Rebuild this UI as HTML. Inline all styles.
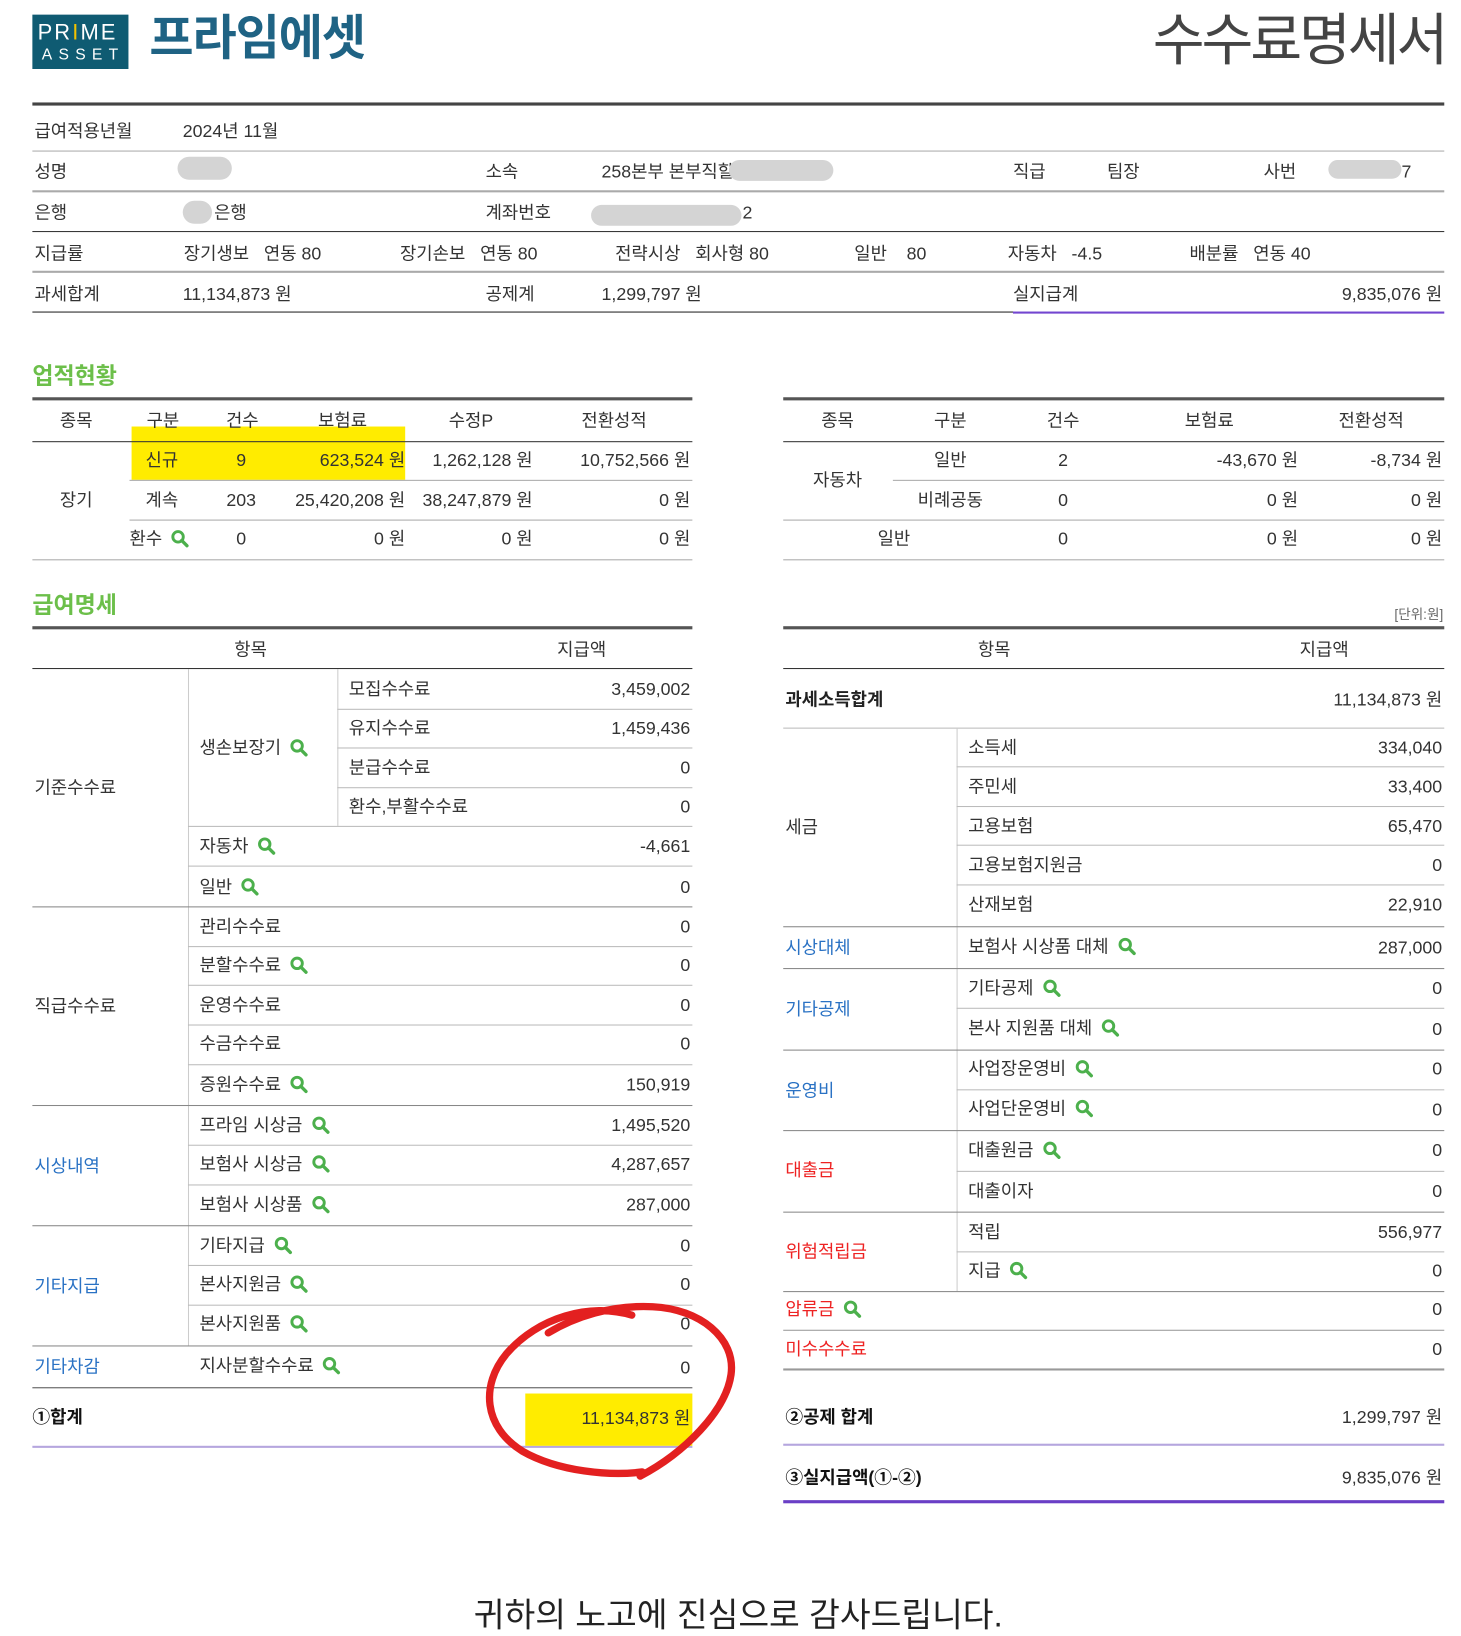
<!DOCTYPE html>
<html><head><meta charset="utf-8">
<style>
html,body{margin:0;padding:0;background:#fff;overflow:hidden}
body{width:1461px;height:1636px;position:relative}
#w{position:absolute;left:0;top:0;width:1390px;height:1565px;transform:scale(1.0443,1.0454);transform-origin:0 0;font-family:"Liberation Sans","Noto Sans CJK KR",sans-serif}
.a{position:absolute;white-space:nowrap;font-size:17px;line-height:22px;color:#333}
.c{transform:translateX(-50%)}
.l{position:absolute;height:1px;background:#bbb}
.v{position:absolute;width:1px;background:#ccc}
.b{color:#2a72c4}.r{color:#ee2222}
.q{display:inline-block;width:18px;height:18px;vertical-align:-3px;margin-left:8px}
.blob{position:absolute;background:#d4d4d4;border-radius:12px}
</style></head><body><div id="w">
<div style="position:absolute;left:31px;top:14px;width:92px;height:52px;background:#0f5b72"></div>
<div class="a" style="left:36px;top:20px;color:#fff;font-size:21px;line-height:24px;letter-spacing:2px">PR<span style="color:#f2c200">I</span>ME</div>
<div class="a" style="left:40px;top:44px;color:#fff;font-size:15px;line-height:18px;letter-spacing:6px">ASSET</div>
<div class="a" style="left:143px;top:8px;font-size:46px;line-height:56px;font-weight:bold;color:#1f6384;letter-spacing:-1px">프라임에셋</div>
<div class="a" style="right:6px;top:6px;font-size:54px;line-height:66px;color:#444;letter-spacing:-3px">수수료명세서</div>
<div class="l" style="left:31px;width:1352px;top:98px;height:3px;background:#444"></div>

<div class="a" style="left:33px;top:115px">급여적용년월</div><div class="a" style="left:175px;top:115px">2024년 11월</div>
<div class="l" style="left:31px;width:1352px;top:144px;background:#aaa"></div>
<div class="a" style="left:33px;top:154px">성명</div><div class="blob" style="left:170px;top:150px;width:52px;height:22px"></div>
<div class="a" style="left:465px;top:154px">소속</div><div class="a" style="left:576px;top:154px">258본부 본부직할</div><div class="blob" style="left:698px;top:153px;width:100px;height:20px"></div>
<div class="a" style="left:970px;top:154px">직급</div><div class="a" style="left:1060px;top:154px">팀장</div>
<div class="a" style="left:1210px;top:154px">사번</div><div class="blob" style="left:1272px;top:153px;width:70px;height:18px"></div><div class="a" style="left:1342px;top:154px">7</div>
<div class="l" style="left:31px;width:1352px;top:182px;height:2px;background:#aaa"></div>
<div class="a" style="left:33px;top:193px">은행</div><div class="blob" style="left:175px;top:192px;width:28px;height:22px"></div><div class="a" style="left:205px;top:193px">은행</div>
<div class="a" style="left:465px;top:193px">계좌번호</div><div class="blob" style="left:566px;top:196px;width:144px;height:20px"></div><div class="a" style="left:711px;top:193px">2</div>
<div class="l" style="left:31px;width:1352px;top:221px;background:#333"></div>
<div class="a" style="left:33px;top:232px">지급률</div>
<div class="a" style="left:176px;top:232px">장기생보&nbsp;&nbsp;&nbsp;연동 80</div>
<div class="a" style="left:383px;top:232px">장기손보&nbsp;&nbsp;&nbsp;연동 80</div>
<div class="a" style="left:589px;top:232px">전략시상&nbsp;&nbsp;&nbsp;회사형 80</div>
<div class="a" style="left:818px;top:232px">일반&nbsp;&nbsp;&nbsp;&nbsp;80</div>
<div class="a" style="left:965px;top:232px">자동차&nbsp;&nbsp;&nbsp;-4.5</div>
<div class="a" style="left:1139px;top:232px">배분률&nbsp;&nbsp;&nbsp;연동 40</div>
<div class="l" style="left:31px;width:1352px;top:259px;height:2px;background:#aaa"></div>
<div class="a" style="left:33px;top:271px">과세합계</div><div class="a" style="left:175px;top:271px">11,134,873 원</div>
<div class="a" style="left:465px;top:271px">공제계</div><div class="a" style="left:576px;top:271px">1,299,797 원</div>
<div class="a" style="left:970px;top:271px">실지급계</div><div class="a" style="right:9px;top:271px">9,835,076 원</div>
<div class="l" style="left:31px;width:940px;top:298px;background:#222"></div>
<div class="l" style="left:970px;width:413px;top:298px;height:2px;background:#7346d0"></div>

<div class="a" style="left:31px;top:346px;font-size:22px;line-height:28px;font-weight:bold;color:#6cbf4a">업적현황</div>
<div style="position:absolute;left:126px;top:408px;width:262px;height:51px;background:#ffec00"></div>
<div class="l" style="left:31px;width:632px;top:380px;height:3px;background:#555"></div>
<div class="l" style="left:750px;width:633px;top:380px;height:3px;background:#555"></div>
<div class="a c" style="left:73px;top:392px">종목</div><div class="a c" style="left:156px;top:392px">구분</div><div class="a c" style="left:232px;top:392px">건수</div><div class="a c" style="left:328px;top:392px">보험료</div><div class="a c" style="left:451px;top:392px">수정P</div><div class="a c" style="left:588px;top:392px">전환성적</div>
<div class="l" style="left:31px;width:632px;top:422px;background:#333"></div>
<div class="a c" style="left:155px;top:430px">신규</div><div class="a c" style="left:231px;top:430px">9</div><div class="a" style="right:1002px;top:430px">623,524 원</div><div class="a" style="right:880px;top:430px">1,262,128 원</div><div class="a" style="right:729px;top:430px">10,752,566 원</div>
<div class="l" style="left:124px;width:539px;top:459px;background:#aaa"></div>
<div class="a c" style="left:73px;top:468px">장기</div>
<div class="a c" style="left:155px;top:468px">계속</div><div class="a c" style="left:231px;top:468px">203</div><div class="a" style="right:1002px;top:468px">25,420,208 원</div><div class="a" style="right:880px;top:468px">38,247,879 원</div><div class="a" style="right:729px;top:468px">0 원</div>
<div class="l" style="left:124px;width:539px;top:497px;background:#aaa"></div>
<div class="a" style="left:124px;top:505px">환수<svg class="q" viewBox="0 0 18 18"><circle cx="7.5" cy="7.5" r="5" fill="none" stroke="#4cb04c" stroke-width="2.8"/><path d="M11 11l5 5" stroke="#4cb04c" stroke-width="3.2" stroke-linecap="round"/></svg></div><div class="a c" style="left:231px;top:505px">0</div><div class="a" style="right:1002px;top:505px">0 원</div><div class="a" style="right:880px;top:505px">0 원</div><div class="a" style="right:729px;top:505px">0 원</div>
<div class="l" style="left:31px;width:632px;top:535px;background:#aaa"></div>

<div class="a c" style="left:802px;top:392px">종목</div><div class="a c" style="left:910px;top:392px">구분</div><div class="a c" style="left:1018px;top:392px">건수</div><div class="a c" style="left:1158px;top:392px">보험료</div><div class="a c" style="left:1313px;top:392px">전환성적</div>
<div class="l" style="left:750px;width:633px;top:422px;background:#333"></div>
<div class="a c" style="left:802px;top:449px">자동차</div>
<div class="a c" style="left:910px;top:430px">일반</div><div class="a c" style="left:1018px;top:430px">2</div><div class="a" style="right:147px;top:430px">-43,670 원</div><div class="a" style="right:9px;top:430px">-8,734 원</div>
<div class="l" style="left:855px;width:528px;top:459px;background:#aaa"></div>
<div class="a c" style="left:910px;top:468px">비례공동</div><div class="a c" style="left:1018px;top:468px">0</div><div class="a" style="right:147px;top:468px">0 원</div><div class="a" style="right:9px;top:468px">0 원</div>
<div class="l" style="left:750px;width:633px;top:497px;background:#aaa"></div>
<div class="a c" style="left:856px;top:505px">일반</div><div class="a c" style="left:1018px;top:505px">0</div><div class="a" style="right:147px;top:505px">0 원</div><div class="a" style="right:9px;top:505px">0 원</div>
<div class="l" style="left:750px;width:633px;top:535px;background:#aaa"></div>

<div class="a" style="left:31px;top:565px;font-size:22px;line-height:28px;font-weight:bold;color:#6cbf4a">급여명세</div>
<div class="a" style="right:8px;top:580px;font-size:13px;line-height:16px;color:#666">[단위:원]</div>
<div class="l" style="left:31px;width:632px;top:599px;height:3px;background:#555"></div>
<div class="l" style="left:750px;width:633px;top:599px;height:3px;background:#555"></div>
<div class="a c" style="left:240px;top:611px">항목</div><div class="a c" style="left:557px;top:611px">지급액</div>
<div class="a c" style="left:952px;top:611px">항목</div><div class="a c" style="left:1268px;top:611px">지급액</div>
<div class="l" style="left:31px;width:632px;top:639px;background:#333"></div>
<div class="l" style="left:750px;width:633px;top:639px;background:#333"></div>

<div class="v" style="left:180px;top:640px;height:647px"></div>
<div class="v" style="left:323px;top:640px;height:150px"></div>
<div class="l" style="left:323px;width:340px;top:678px"></div>
<div class="l" style="left:323px;width:340px;top:715px"></div>
<div class="l" style="left:323px;width:340px;top:753px"></div>
<div class="l" style="left:180px;width:483px;top:790px"></div>
<div class="l" style="left:180px;width:483px;top:828px"></div>
<div class="l" style="left:31px;width:632px;top:867px;background:#888"></div>
<div class="l" style="left:180px;width:483px;top:905px"></div>
<div class="l" style="left:180px;width:483px;top:942px"></div>
<div class="l" style="left:180px;width:483px;top:980px"></div>
<div class="l" style="left:180px;width:483px;top:1018px"></div>
<div class="l" style="left:31px;width:632px;top:1057px;background:#888"></div>
<div class="l" style="left:180px;width:483px;top:1095px"></div>
<div class="l" style="left:180px;width:483px;top:1133px"></div>
<div class="l" style="left:31px;width:632px;top:1172px;background:#888"></div>
<div class="l" style="left:180px;width:483px;top:1210px"></div>
<div class="l" style="left:180px;width:483px;top:1248px"></div>
<div class="l" style="left:31px;width:632px;top:1287px;background:#888"></div>
<div class="l" style="left:31px;width:632px;top:1327px;background:#555"></div>
<div class="l" style="left:31px;width:632px;top:1383px;height:2px;background:#b5a6de"></div>

<div class="a" style="left:33px;top:743px">기준수수료</div>
<div class="a" style="left:191px;top:705px">생손보장기<svg class="q" viewBox="0 0 18 18"><circle cx="7.5" cy="7.5" r="5" fill="none" stroke="#4cb04c" stroke-width="2.8"/><path d="M11 11l5 5" stroke="#4cb04c" stroke-width="3.2" stroke-linecap="round"/></svg></div>
<div class="a" style="left:334px;top:649px">모집수수료</div><div class="a" style="right:729px;top:649px">3,459,002</div>
<div class="a" style="left:334px;top:686px">유지수수료</div><div class="a" style="right:729px;top:686px">1,459,436</div>
<div class="a" style="left:334px;top:724px">분급수수료</div><div class="a" style="right:729px;top:724px">0</div>
<div class="a" style="left:334px;top:761px">환수,부활수수료</div><div class="a" style="right:729px;top:761px">0</div>
<div class="a" style="left:191px;top:799px">자동차<svg class="q" viewBox="0 0 18 18"><circle cx="7.5" cy="7.5" r="5" fill="none" stroke="#4cb04c" stroke-width="2.8"/><path d="M11 11l5 5" stroke="#4cb04c" stroke-width="3.2" stroke-linecap="round"/></svg></div><div class="a" style="right:729px;top:799px">-4,661</div>
<div class="a" style="left:191px;top:838px">일반<svg class="q" viewBox="0 0 18 18"><circle cx="7.5" cy="7.5" r="5" fill="none" stroke="#4cb04c" stroke-width="2.8"/><path d="M11 11l5 5" stroke="#4cb04c" stroke-width="3.2" stroke-linecap="round"/></svg></div><div class="a" style="right:729px;top:838px">0</div>

<div class="a" style="left:33px;top:952px">직급수수료</div>
<div class="a" style="left:191px;top:876px">관리수수료</div><div class="a" style="right:729px;top:876px">0</div>
<div class="a" style="left:191px;top:913px">분할수수료<svg class="q" viewBox="0 0 18 18"><circle cx="7.5" cy="7.5" r="5" fill="none" stroke="#4cb04c" stroke-width="2.8"/><path d="M11 11l5 5" stroke="#4cb04c" stroke-width="3.2" stroke-linecap="round"/></svg></div><div class="a" style="right:729px;top:913px">0</div>
<div class="a" style="left:191px;top:951px">운영수수료</div><div class="a" style="right:729px;top:951px">0</div>
<div class="a" style="left:191px;top:988px">수금수수료</div><div class="a" style="right:729px;top:988px">0</div>
<div class="a" style="left:191px;top:1027px">증원수수료<svg class="q" viewBox="0 0 18 18"><circle cx="7.5" cy="7.5" r="5" fill="none" stroke="#4cb04c" stroke-width="2.8"/><path d="M11 11l5 5" stroke="#4cb04c" stroke-width="3.2" stroke-linecap="round"/></svg></div><div class="a" style="right:729px;top:1027px">150,919</div>

<div class="a b" style="left:33px;top:1105px">시상내역</div>
<div class="a" style="left:191px;top:1066px">프라임 시상금<svg class="q" viewBox="0 0 18 18"><circle cx="7.5" cy="7.5" r="5" fill="none" stroke="#4cb04c" stroke-width="2.8"/><path d="M11 11l5 5" stroke="#4cb04c" stroke-width="3.2" stroke-linecap="round"/></svg></div><div class="a" style="right:729px;top:1066px">1,495,520</div>
<div class="a" style="left:191px;top:1103px">보험사 시상금<svg class="q" viewBox="0 0 18 18"><circle cx="7.5" cy="7.5" r="5" fill="none" stroke="#4cb04c" stroke-width="2.8"/><path d="M11 11l5 5" stroke="#4cb04c" stroke-width="3.2" stroke-linecap="round"/></svg></div><div class="a" style="right:729px;top:1103px">4,287,657</div>
<div class="a" style="left:191px;top:1142px">보험사 시상품<svg class="q" viewBox="0 0 18 18"><circle cx="7.5" cy="7.5" r="5" fill="none" stroke="#4cb04c" stroke-width="2.8"/><path d="M11 11l5 5" stroke="#4cb04c" stroke-width="3.2" stroke-linecap="round"/></svg></div><div class="a" style="right:729px;top:1142px">287,000</div>

<div class="a b" style="left:33px;top:1220px">기타지급</div>
<div class="a" style="left:191px;top:1181px">기타지급<svg class="q" viewBox="0 0 18 18"><circle cx="7.5" cy="7.5" r="5" fill="none" stroke="#4cb04c" stroke-width="2.8"/><path d="M11 11l5 5" stroke="#4cb04c" stroke-width="3.2" stroke-linecap="round"/></svg></div><div class="a" style="right:729px;top:1181px">0</div>
<div class="a" style="left:191px;top:1218px">본사지원금<svg class="q" viewBox="0 0 18 18"><circle cx="7.5" cy="7.5" r="5" fill="none" stroke="#4cb04c" stroke-width="2.8"/><path d="M11 11l5 5" stroke="#4cb04c" stroke-width="3.2" stroke-linecap="round"/></svg></div><div class="a" style="right:729px;top:1218px">0</div>
<div class="a" style="left:191px;top:1256px">본사지원품<svg class="q" viewBox="0 0 18 18"><circle cx="7.5" cy="7.5" r="5" fill="none" stroke="#4cb04c" stroke-width="2.8"/><path d="M11 11l5 5" stroke="#4cb04c" stroke-width="3.2" stroke-linecap="round"/></svg></div><div class="a" style="right:729px;top:1256px">0</div>
<div class="a b" style="left:33px;top:1297px">기타차감</div>
<div class="a" style="left:191px;top:1296px">지사분할수수료<svg class="q" viewBox="0 0 18 18"><circle cx="7.5" cy="7.5" r="5" fill="none" stroke="#4cb04c" stroke-width="2.8"/><path d="M11 11l5 5" stroke="#4cb04c" stroke-width="3.2" stroke-linecap="round"/></svg></div><div class="a" style="right:729px;top:1298px">0</div>

<div style="position:absolute;left:503px;top:1333px;width:160px;height:50px;background:#ffec00"></div>
<div class="a" style="left:31px;top:1345px;font-weight:bold;color:#111">①합계</div>
<div class="a" style="right:729px;top:1346px">11,134,873 원</div>
<svg style="position:absolute;left:455px;top:1240px" width="260" height="185" viewBox="0 0 260 185"><path d="M150 18 C110 6 60 20 30 55 C5 85 8 125 45 148 C80 168 130 172 160 168 M158 172 C200 150 240 110 245 75 C250 40 215 12 170 10 C130 8 95 20 70 35" fill="none" stroke="#e32020" stroke-width="7" stroke-linecap="round"/></svg>

<div class="a" style="left:752px;top:659px;font-weight:bold;color:#222">과세소득합계</div><div class="a" style="right:9px;top:659px">11,134,873 원</div>
<div class="l" style="left:750px;width:633px;top:696px"></div>
<div class="v" style="left:916px;top:696px;height:539px"></div>
<div class="a" style="left:752px;top:781px">세금</div>
<div class="a" style="left:927px;top:705px">소득세</div><div class="a" style="right:9px;top:705px">334,040</div>
<div class="l" style="left:916px;width:467px;top:733px"></div>
<div class="a" style="left:927px;top:742px">주민세</div><div class="a" style="right:9px;top:742px">33,400</div>
<div class="l" style="left:916px;width:467px;top:771px"></div>
<div class="a" style="left:927px;top:780px">고용보험</div><div class="a" style="right:9px;top:780px">65,470</div>
<div class="l" style="left:916px;width:467px;top:808px"></div>
<div class="a" style="left:927px;top:817px">고용보험지원금</div><div class="a" style="right:9px;top:817px">0</div>
<div class="l" style="left:916px;width:467px;top:846px"></div>
<div class="a" style="left:927px;top:855px">산재보험</div><div class="a" style="right:9px;top:855px">22,910</div>
<div class="l" style="left:750px;width:633px;top:886px;background:#888"></div>
<div class="a b" style="left:752px;top:896px">시상대체</div>
<div class="a" style="left:927px;top:895px">보험사 시상품 대체<svg class="q" viewBox="0 0 18 18"><circle cx="7.5" cy="7.5" r="5" fill="none" stroke="#4cb04c" stroke-width="2.8"/><path d="M11 11l5 5" stroke="#4cb04c" stroke-width="3.2" stroke-linecap="round"/></svg></div><div class="a" style="right:9px;top:896px">287,000</div>
<div class="l" style="left:750px;width:633px;top:926px;background:#888"></div>
<div class="a b" style="left:752px;top:955px">기타공제</div>
<div class="a" style="left:927px;top:935px">기타공제<svg class="q" viewBox="0 0 18 18"><circle cx="7.5" cy="7.5" r="5" fill="none" stroke="#4cb04c" stroke-width="2.8"/><path d="M11 11l5 5" stroke="#4cb04c" stroke-width="3.2" stroke-linecap="round"/></svg></div><div class="a" style="right:9px;top:935px">0</div>
<div class="l" style="left:916px;width:467px;top:964px"></div>
<div class="a" style="left:927px;top:973px">본사 지원품 대체<svg class="q" viewBox="0 0 18 18"><circle cx="7.5" cy="7.5" r="5" fill="none" stroke="#4cb04c" stroke-width="2.8"/><path d="M11 11l5 5" stroke="#4cb04c" stroke-width="3.2" stroke-linecap="round"/></svg></div><div class="a" style="right:9px;top:974px">0</div>
<div class="l" style="left:750px;width:633px;top:1004px;background:#888"></div>
<div class="a b" style="left:752px;top:1033px">운영비</div>
<div class="a" style="left:927px;top:1012px">사업장운영비<svg class="q" viewBox="0 0 18 18"><circle cx="7.5" cy="7.5" r="5" fill="none" stroke="#4cb04c" stroke-width="2.8"/><path d="M11 11l5 5" stroke="#4cb04c" stroke-width="3.2" stroke-linecap="round"/></svg></div><div class="a" style="right:9px;top:1012px">0</div>
<div class="l" style="left:916px;width:467px;top:1042px"></div>
<div class="a" style="left:927px;top:1050px">사업단운영비<svg class="q" viewBox="0 0 18 18"><circle cx="7.5" cy="7.5" r="5" fill="none" stroke="#4cb04c" stroke-width="2.8"/><path d="M11 11l5 5" stroke="#4cb04c" stroke-width="3.2" stroke-linecap="round"/></svg></div><div class="a" style="right:9px;top:1051px">0</div>
<div class="l" style="left:750px;width:633px;top:1081px;background:#888"></div>
<div class="a r" style="left:752px;top:1109px">대출금</div>
<div class="a" style="left:927px;top:1090px">대출원금<svg class="q" viewBox="0 0 18 18"><circle cx="7.5" cy="7.5" r="5" fill="none" stroke="#4cb04c" stroke-width="2.8"/><path d="M11 11l5 5" stroke="#4cb04c" stroke-width="3.2" stroke-linecap="round"/></svg></div><div class="a" style="right:9px;top:1090px">0</div>
<div class="l" style="left:916px;width:467px;top:1120px"></div>
<div class="a" style="left:927px;top:1129px">대출이자</div><div class="a" style="right:9px;top:1129px">0</div>
<div class="l" style="left:750px;width:633px;top:1159px;background:#888"></div>
<div class="a r" style="left:752px;top:1187px">위험적립금</div>
<div class="a" style="left:927px;top:1168px">적립</div><div class="a" style="right:9px;top:1168px">556,977</div>
<div class="l" style="left:916px;width:467px;top:1197px"></div>
<div class="a" style="left:927px;top:1205px">지급<svg class="q" viewBox="0 0 18 18"><circle cx="7.5" cy="7.5" r="5" fill="none" stroke="#4cb04c" stroke-width="2.8"/><path d="M11 11l5 5" stroke="#4cb04c" stroke-width="3.2" stroke-linecap="round"/></svg></div><div class="a" style="right:9px;top:1205px">0</div>
<div class="l" style="left:750px;width:633px;top:1235px;background:#888"></div>
<div class="a r" style="left:752px;top:1242px">압류금<svg class="q" viewBox="0 0 18 18"><circle cx="7.5" cy="7.5" r="5" fill="none" stroke="#4cb04c" stroke-width="2.8"/><path d="M11 11l5 5" stroke="#4cb04c" stroke-width="3.2" stroke-linecap="round"/></svg></div><div class="a" style="right:9px;top:1242px">0</div>
<div class="l" style="left:750px;width:633px;top:1272px;background:#999"></div>
<div class="a r" style="left:752px;top:1280px">미수수수료</div><div class="a" style="right:9px;top:1280px">0</div>
<div class="l" style="left:750px;width:633px;top:1309px;height:2px;background:#999"></div>
<div class="a" style="left:752px;top:1345px;font-weight:bold;color:#111">②공제 합계</div><div class="a" style="right:9px;top:1345px">1,299,797 원</div>
<div class="l" style="left:750px;width:633px;top:1381px;height:2px;background:#b5a6de"></div>
<div class="a" style="left:752px;top:1403px;font-weight:bold;color:#111">③실지급액(①-②)</div><div class="a" style="right:9px;top:1403px">9,835,076 원</div>
<div class="l" style="left:750px;width:633px;top:1435px;height:3px;background:#6a3fc6"></div>

<div class="a c" style="left:707px;top:1524px;font-size:32px;line-height:42px;color:#222">귀하의 노고에 진심으로 감사드립니다.</div>
</div></body></html>
